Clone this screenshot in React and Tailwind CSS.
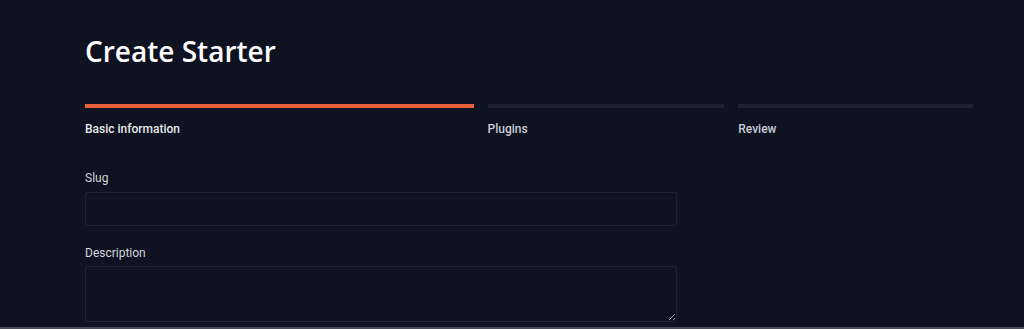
export default function App() {
  return (
    <div className="h-[329px] w-full bg-[#0f1220] flex flex-col overflow-hidden" style={{ fontFamily: "Roboto, 'Liberation Sans', sans-serif" }}>
      <div className="flex-1 pl-[85px] pr-[51px] pt-[33px]">
        <h1 className="text-[28px] leading-[36px] font-semibold text-white" style={{ fontFamily: "'Open Sans', sans-serif" }}>
          Create Starter
        </h1>
        <div className="mt-[35px] flex gap-[14px]">
          <div className="w-[389px]">
            <div className="h-[4px] bg-[#e8603a]" />
            <div className="mt-[12px] text-[12px] font-medium text-[#e5e7eb]">Basic information</div>
          </div>
          <div className="w-[237px]">
            <div className="h-[4px] bg-[#1d2130]" />
            <div className="mt-[12px] text-[12px] font-medium text-[#c8ccd6]">Plugins</div>
          </div>
          <div className="w-[235px]">
            <div className="h-[4px] bg-[#1d2130]" />
            <div className="mt-[12px] text-[12px] font-medium text-[#c8ccd6]">Review</div>
          </div>
        </div>
        <div className="mt-[32px] w-[592px] flex flex-col">
          <label className="text-[12px] leading-[16px] text-[#d1d5db]">Slug</label>
          <input className="mt-[6px] h-[34px] w-full rounded-[2px] border border-[#1e2231] bg-[#0f1220] outline-none" />
          <label className="mt-[19px] text-[12px] leading-[16px] text-[#d1d5db]">Description</label>
          <textarea className="mt-[5px] h-[56px] w-full rounded-[2px] border border-[#1e2231] bg-[#0f1220] outline-none resize-y" />
        </div>
      </div>
      <div className="h-[2px] bg-[#4a4f5c] shrink-0" />
    </div>
  );
}
